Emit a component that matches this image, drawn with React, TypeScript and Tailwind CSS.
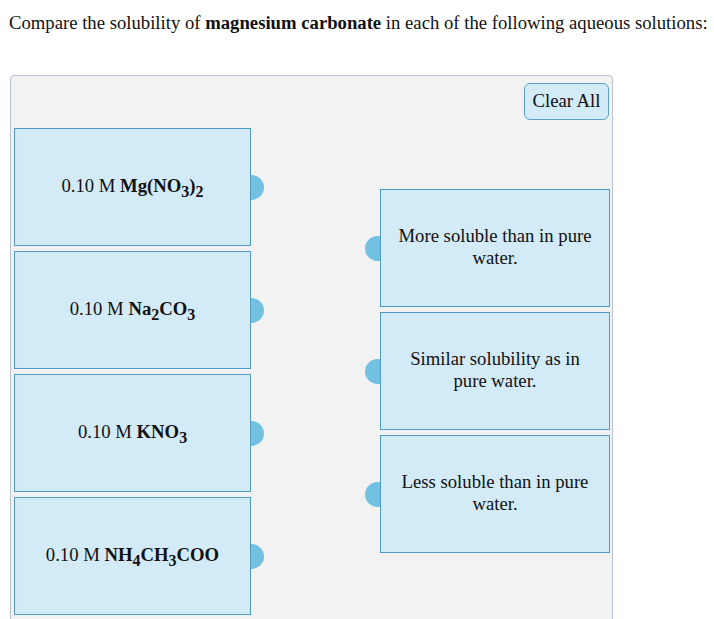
import React from "react";

const Sub = ({ children }: { children: React.ReactNode }) => (
  <span className="relative top-[5px] text-[16px] leading-none">{children}</span>
);

const leftItems: React.ReactNode[] = [
  <>0.10 M <b>Mg(NO<Sub>3</Sub>)<Sub>2</Sub></b></>,
  <>0.10 M <b>Na<Sub>2</Sub>CO<Sub>3</Sub></b></>,
  <>0.10 M <b>KNO<Sub>3</Sub></b></>,
  <>0.10 M <b>NH<Sub>4</Sub>CH<Sub>3</Sub>COO</b></>,
];

const rightItems = [
  "More soluble than in pure water.",
  "Similar solubility as in pure water.",
  "Less soluble than in pure water.",
];

export default function App() {
  return (
    <div
      className="w-[714px] h-[619px] overflow-hidden bg-white text-[#111] text-[18.7px]"
      style={{ fontFamily: '"Liberation Serif", "Times New Roman", serif' }}
    >
      <div className="pt-[12px] pl-[9px] leading-[22px] whitespace-nowrap">
        Compare the solubility of <b>magnesium carbonate</b> in each of the following aqueous solutions:
      </div>
      <div className="ml-[10px] mt-[41px] w-[603px] h-[560px] border border-[#b7c4d0] rounded-[4px] bg-[#f2f2f2]">
        <div className="flex justify-end pt-[7px] pr-[3px]">
          <div className="w-[85px] h-[37px] flex items-center justify-center border border-[#5b9fc6] rounded-[6px] bg-[#d3eaf7] leading-none">
            Clear All
          </div>
        </div>
        <div className="flex">
          <div className="ml-[3px] mt-[8px] flex flex-col gap-[5px]">
            {leftItems.map((item, i) => (
              <div key={i} className="flex items-center">
                <div className="w-[237px] h-[118px] border border-[#4f9bc6] bg-[#d3eaf7] flex items-center justify-center text-center leading-[22px]">
                  <span className="relative top-[-1px]">{item}</span>
                </div>
                <div className="w-[13px] h-[25px] rounded-r-full bg-[#72c1e1]" />
              </div>
            ))}
          </div>
          <div className="ml-[101px] mt-[69px] flex flex-col gap-[5px]">
            {rightItems.map((t, i) => (
              <div key={i} className="flex items-center">
                <div className="w-[15px] h-[25px] overflow-hidden">
                  <div className="w-[25px] h-[25px] rounded-full bg-[#72c1e1]" />
                </div>
                <div className="w-[230px] h-[118px] border border-[#4f9bc6] bg-[#d3eaf7] flex items-center justify-center text-center px-[14px] leading-[22px]">
                  <span className="relative top-[-1px]">{t}</span>
                </div>
              </div>
            ))}
          </div>
        </div>
      </div>
    </div>
  );
}
